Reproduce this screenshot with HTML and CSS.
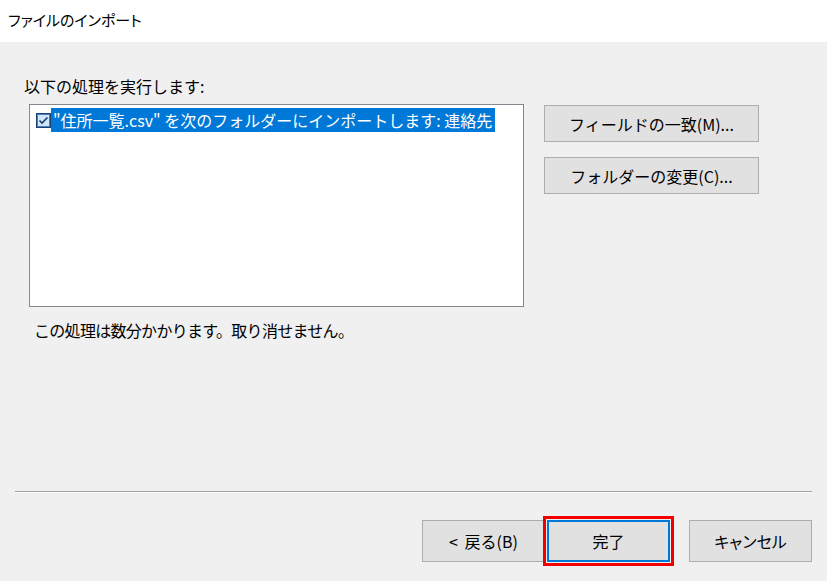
FILE: index.html
```html
<!DOCTYPE html>
<html lang="ja">
<head>
<meta charset="utf-8">
<title>ファイルのインポート</title>
<link rel="stylesheet" href="styles.css">
</head>
<body>
<div class="dialog">
  <div class="titlebar">ファイルのインポート</div>
  <div class="content">
    <div class="label">以下の処理を実行します:</div>
    <div class="row">
      <div class="listbox">
        <div class="item">
          <svg class="check" width="15" height="15" viewBox="0 0 15 15">
            <rect x="0.5" y="0.5" width="14" height="14" fill="#8cc2ee" stroke="#1c3f73"/>
            <rect x="1.5" y="1.5" width="12" height="12" fill="#cfe6fa" stroke="#4a7fbf"/>
            <path d="M3.5 7.5 L6 10 L11.5 4.5" fill="none" stroke="#1c3f73" stroke-width="1.6"/>
          </svg>
          <span class="sel">"住所一覧.csv" を次のフォルダーにインポートします: 連絡先</span>
        </div>
      </div>
      <div class="side">
        <button class="btn side-btn">フィールドの一致(M)...</button>
        <button class="btn side-btn">フォルダーの変更(C)...</button>
      </div>
    </div>
    <div class="note">この処理は数分かかります。取り消せません。</div>
  </div>
  <div class="sep"></div>
  <div class="footer">
    <button class="btn foot-btn back">&lt; 戻る(B)</button>
    <button class="btn foot-btn finish">完了</button>
    <button class="btn foot-btn cancel">キャンセル</button>
  </div>
</div>
</body>
</html>
```

FILE: styles.css
```css
* { box-sizing: border-box; }
html, body { margin: 0; padding: 0; }
body {
  background: #f0f0f0;
  font-family: "Noto Sans CJK JP", "Noto Sans", sans-serif;
  color: #000;
  font-size: 16px;
}
.dialog {
  width: 827px;
  height: 581px;
  display: flex;
  flex-direction: column;
  overflow: hidden;
}
.titlebar {
  height: 42px;
  background: #fff;
  padding-left: 8px;
  line-height: 39px;
  font-size: 15px;
  font-feature-settings: "palt";
}
.content {
  flex: 1;
  padding: 0 24px;
}
.label {
  margin-top: 34px;
  line-height: 20px;
}
.row {
  display: flex;
  margin-top: 8px;
  margin-left: 5px;
}
.listbox {
  width: 495px;
  height: 203px;
  background: #fff;
  border: 1px solid #828790;
  padding: 3px 0 0 6px;
}
.item {
  display: flex;
  align-items: center;
  height: 24px;
}
.check {
  flex: none;
  display: block;
}
.sel {
  background: #0078d7;
  color: #fff;
  line-height: 24px;
  padding: 0 3px 0 2px;
  white-space: nowrap;
}
.side {
  margin-left: 20px;
  margin-top: 1px;
  display: flex;
  flex-direction: column;
  gap: 15px;
}
.btn {
  font-family: inherit;
  font-size: 16px;
  color: #000;
  background: #e1e1e1;
  border: 1px solid #adadad;
  border-radius: 0;
  padding: 0;
  margin: 0;
}
.side-btn {
  width: 215px;
  height: 37px;
}
.note {
  margin-top: 13px;
  margin-left: 10px;
  line-height: 20px;
  letter-spacing: -0.7px;
}
.sep {
  margin: 0 15px;
  border-top: 1px solid #a0a0a0;
  border-bottom: 1px solid #fff;
}
.footer {
  display: flex;
  justify-content: flex-end;
  padding: 27px 15px 19px;
}
.foot-btn {
  width: 123px;
  height: 42px;
}
.back {
  margin-right: 2px;
  word-spacing: 3px;
}
.finish {
  border: 2px solid #0078d7;
  outline: 3px solid #f20000;
  outline-offset: 1px;
  margin-right: 19px;
}
.cancel { font-feature-settings: "palt"; }
```
